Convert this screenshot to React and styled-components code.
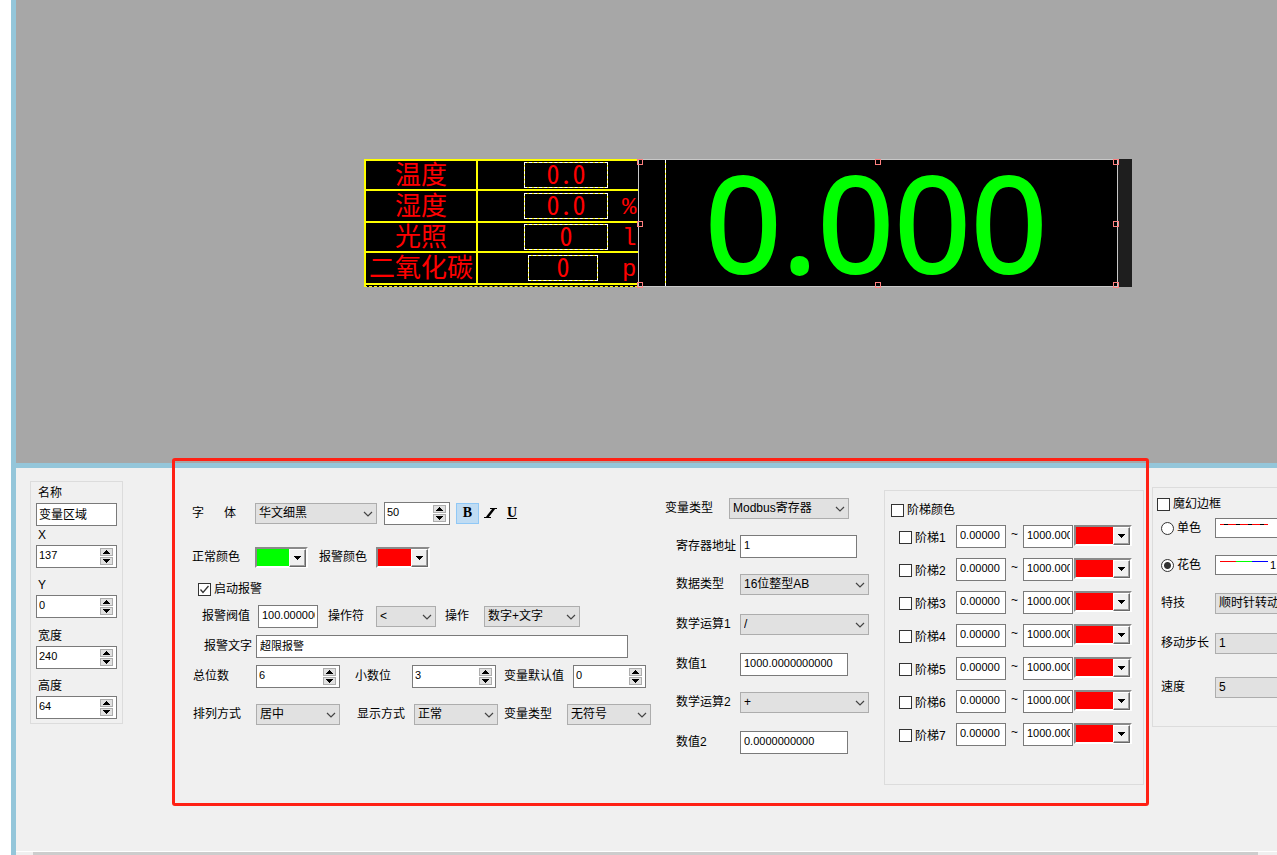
import React, { useId, useState } from "react";
import styled, { createGlobalStyle } from "styled-components";

const ledRows = [
  { name: "温度", value: "0.0", unit: "", boxLeft: 46, boxWidth: 84, height: 30 },
  { name: "湿度", value: "0.0", unit: "%RH", boxLeft: 46, boxWidth: 84, height: 32 },
  { name: "光照", value: "0", unit: "lx", boxLeft: 46, boxWidth: 84, height: 30 },
  { name: "二氧化碳", value: "0", unit: "ppm", boxLeft: 50, boxWidth: 70, height: 32 },
];

const handles = ["0 0", "0 50", "0 100", "50 0", "50 100", "100 0", "100 50", "100 100"];

const stages = [1, 2, 3, 4, 5, 6, 7];

const Spin = ({ id, width, value }) => {
  const [number, setNumber] = useState(value);
  return (
    <SpinBox $w={width}>
      <input id={id} value={number} onChange={(e) => setNumber(e.target.value)} />
      <div className="arrows">
        <button aria-label="增加" onClick={() => setNumber(Number(number) + 1)}>
          <svg width="7" height="4" viewBox="0 0 7 4">
            <path d="M3 0h1v1h1v1h1v1h1v1H0V3h1V2h1V1h1z" />
          </svg>
        </button>
        <button aria-label="减少" onClick={() => setNumber(Number(number) - 1)}>
          <svg width="7" height="4" viewBox="0 0 7 4">
            <path d="M0 0h7v1H6v1H5v1H4v1H3V3H2V2H1V1H0z" />
          </svg>
        </button>
      </div>
    </SpinBox>
  );
};

const Select = ({ id, width, value }) => (
  <SelectBox $w={width}>
    <select id={id} defaultValue={value}>
      <option>{value}</option>
    </select>
    <svg width="10" height="6" viewBox="0 0 10 6">
      <path d="M1 1l4 4 4-4" fill="none" stroke="#444" strokeWidth="1.2" />
    </svg>
  </SelectBox>
);

const Color = ({ id, width, color, label }) => (
  <ColorButton id={id} aria-label={label} $w={width} $color={color}>
    <span className="swatch" />
    <span className="drop">
      <svg width="7" height="4" viewBox="0 0 7 4">
        <path d="M0 0h7v1H6v1H5v1H4v1H3V3H2V2H1V1H0z" />
      </svg>
    </span>
  </ColorButton>
);

const Field = ({ label, labelWidth, left, type, width, value, color }) => {
  const id = useId();
  return (
    <>
      <Label htmlFor={id} $w={labelWidth} $left={left}>
        {label}
      </Label>
      {type === "spin" && <Spin id={id} width={width} value={value} />}
      {type === "select" && <Select id={id} width={width} value={value} />}
      {type === "text" && <TextInput id={id} $w={width} defaultValue={value} />}
      {type === "color" && <Color id={id} width={width} color={color} />}
    </>
  );
};

const App = () => {
  return (
    <Page>
      <GlobalStyle />
      <Canvas>
        <Screen>
          <LedTable>
            <tbody>
              {ledRows.map((row) => (
                <LedRow key={row.name} $h={row.height}>
                  <td className="name">{row.name}</td>
                  <td className="value">
                    <LedValue $left={row.boxLeft} $w={row.boxWidth}>
                      {row.value}
                    </LedValue>
                  </td>
                  <td className="unit">{row.unit}</td>
                </LedRow>
              ))}
            </tbody>
          </LedTable>
          <Variable>
            <span className="guide" />
            0.000
            {handles.map((place) => (
              <Handle key={place} $x={place.split(" ")[0]} $y={place.split(" ")[1]} />
            ))}
          </Variable>
        </Screen>
      </Canvas>

      <Panel>
        <Position>
          <div className="item">
            <label htmlFor="area-name">名称</label>
            <TextInput id="area-name" className="title" $w={81} defaultValue="变量区域" />
          </div>
          <div className="item">
            <label htmlFor="area-x">X</label>
            <Spin id="area-x" width={81} value="137" />
          </div>
          <div className="item">
            <label htmlFor="area-y">Y</label>
            <Spin id="area-y" width={81} value="0" />
          </div>
          <div className="item">
            <label htmlFor="area-w">宽度</label>
            <Spin id="area-w" width={81} value="240" />
          </div>
          <div className="item">
            <label htmlFor="area-h">高度</label>
            <Spin id="area-h" width={81} value="64" />
          </div>
        </Position>

        <Main>
          <Column $top={33} $w={473}>
            <Row>
              <Field label="字      体" labelWidth={63} type="select" width={122} value="华文细黑" />
              <FontSize>
                <Spin id="font-size" width={66} value="50" />
              </FontSize>
              <StyleButton $active aria-label="粗体">B</StyleButton>
              <StyleButton aria-label="斜体">
                <svg width="13" height="10" viewBox="0 0 13 10">
                  <path d="M6 .5h7M0 9.500h7" stroke="#000" />
                  <path d="M10 .5L3 9.500" stroke="#000" strokeWidth="2.4" />
                </svg>
              </StyleButton>
              <StyleButton aria-label="下划线"><u>U</u></StyleButton>
            </Row>
            <Row $gap={20}>
              <Field label="正常颜色" labelWidth={63} type="color" width={53} color="#00ff00" />
              <Field label="报警颜色" labelWidth={57} left={11} type="color" width={54} color="#ff0000" />
            </Row>
            <Row $gap={8} $indent={6}>
              <Check>
                <input type="checkbox" defaultChecked />
                启动报警
              </Check>
            </Row>
            <Row $gap={3} $indent={10}>
              <Field label="报警阀值" labelWidth={56} type="text" width={60} value="100.000000" />
              <Field label="操作符" labelWidth={48} left={10} type="select" width={60} value="<" />
              <Field label="操作" labelWidth={39} left={9} type="select" width={96} value="数字+文字" />
            </Row>
            <Row $gap={6} $indent={12}>
              <Field label="报警文字" labelWidth={52} type="text" width={372} value="超限报警" />
            </Row>
            <Row $gap={6} $indent={1}>
              <Field label="总位数" labelWidth={63} type="spin" width={84} value="6" />
              <Field label="小数位" labelWidth={57} left={15} type="spin" width={84} value="3" />
              <Field label="变量默认值" labelWidth={69} left={8} type="spin" width={73} value="0" />
            </Row>
            <Row $gap={14} $indent={1}>
              <Field label="排列方式" labelWidth={63} type="select" width={84} value="居中" />
              <Field label="显示方式" labelWidth={57} left={17} type="select" width={84} value="正常" />
              <Field label="变量类型" labelWidth={63} left={6} type="select" width={84} value="无符号" />
            </Row>
          </Column>

          <Column $top={28} $w={219}>
            <Row>
              <Field label="变量类型" labelWidth={64} type="select" width={120} value="Modbus寄存器" />
            </Row>
            <Row $gap={14} $indent={11}>
              <Field label="寄存器地址" labelWidth={64} type="text" width={117} value="1" />
            </Row>
            <Row $gap={14} $indent={11}>
              <Field label="数据类型" labelWidth={64} type="select" width={129} value="16位整型AB" />
            </Row>
            <Row $gap={16} $indent={11}>
              <Field label="数学运算1" labelWidth={64} type="select" width={129} value="/" />
            </Row>
            <Row $gap={16} $indent={11}>
              <Field label="数值1" labelWidth={64} type="text" width={108} value="1000.0000000000" />
            </Row>
            <Row $gap={14} $indent={11}>
              <Field label="数学运算2" labelWidth={64} type="select" width={129} value="+" />
            </Row>
            <Row $gap={16} $indent={11}>
              <Field label="数值2" labelWidth={64} type="text" width={108} value="0.0000000000" />
            </Row>
          </Column>

          <Stages>
            <Check>
              <input type="checkbox" />
              阶梯颜色
            </Check>
            {stages.map((n) => (
              <StageRow key={n}>
                <Check>
                  <input type="checkbox" />
                  阶梯{n}
                </Check>
                <TextInput aria-label={`阶梯${n} 下限`} $w={50} defaultValue="0.00000" />
                <span className="tilde">~</span>
                <TextInput aria-label={`阶梯${n} 上限`} $w={50} defaultValue="1000.00000" />
                <Color label={`阶梯${n} 颜色`} width={58} color="#ff0000" />
              </StageRow>
            ))}
          </Stages>
          <Highlight />
        </Main>

        <Magic>
          <Row>
            <Check>
              <input type="checkbox" />
              魔幻边框
            </Check>
          </Row>
          <Row $indent={4}>
            <Check $w={54}>
              <input type="radio" name="magic" />
              单色
            </Check>
            <LineSelect aria-label="单色线型" $line="repeating-linear-gradient(90deg, #f00 0 4px, #000 4px 8px, #f00 8px 12px)">
              <option aria-label="1" />
            </LineSelect>
          </Row>
          <Row $gap={13} $indent={4}>
            <Check $w={54}>
              <input type="radio" name="magic" defaultChecked />
              花色
            </Check>
            <LineSelect aria-label="花色线型" $line="linear-gradient(90deg, #f00 0 16px, #0f0 16px 32px, #00f 32px 48px)">
              <option>1</option>
            </LineSelect>
          </Row>
          <Row $gap={14} $indent={4}>
            <Field label="特技" labelWidth={54} type="select" width={120} value="顺时针转动" />
          </Row>
          <Row $gap={16} $indent={4}>
            <Field label="移动步长" labelWidth={54} type="select" width={120} value="1" />
          </Row>
          <Row $gap={20} $indent={4}>
            <Field label="速度" labelWidth={54} type="select" width={120} value="5" />
          </Row>
        </Magic>
      </Panel>
      <ScrollBar>
        <span />
      </ScrollBar>
    </Page>
  );
};

export default App;

const GlobalStyle = createGlobalStyle`
  * {
    box-sizing: border-box;
  }

  body {
    margin: 0;
    background: #fff;
  }

  body, input, select, button {
    font-family: "Liberation Sans", "Noto Sans CJK SC", sans-serif;
    font-size: 12px;
    color: #000;
  }

  input, select, button {
    margin: 0;
    padding: 0;
    border-radius: 0;
    outline: none;
  }
`;

const Page = styled.div`
  display: flex;
  flex-direction: column;
  min-height: 100vh;
  margin-left: 11px;
  border-left: 5px solid #94c6da;
  overflow: hidden;
`;

const Canvas = styled.div`
  flex: 1;
  padding: 159px 0 0 348px;
  background: #a7a7a7;
`;

const Screen = styled.div`
  display: flex;
  width: 768px;
  height: 128px;
  background: #1e1e1e;
`;

const LedTable = styled.table`
  position: relative;
  display: block;
  width: 274px;
  height: 128px;
  border-top: 2px solid #ff0;
  border-left: 2px solid #ff0;
  border-spacing: 0;
  background: #000;
  color: #f00;
  overflow: hidden;

  tbody {
    display: block;
  }

  &::after {
    content: "";
    position: absolute;
    inset: -2px 0 0 -2px;
    border: 1px dashed #fff;
    border-right: 0;
    border-bottom-color: #ff0;
  }
`;

const LedRow = styled.tr`
  display: flex;
  align-items: center;
  height: ${(p) => p.$h}px;
  border-bottom: 2px solid #ff0;
  font-size: 26px;
  line-height: 26px;

  td {
    padding: 0;
  }

  .name {
    display: flex;
    align-items: center;
    justify-content: center;
    align-self: stretch;
    flex: none;
    width: 112px;
    border-right: 2px solid #ff0;
    white-space: nowrap;
  }

  .value {
    width: 144px;
    flex: none;
  }

  .unit {
    padding-top: 3px;
    font-family: "Liberation Mono", monospace;
    font-size: 24px;
    line-height: 24px;
  }
`;

const LedValue = styled.div`
  width: ${(p) => p.$w}px;
  height: 26px;
  margin-left: ${(p) => p.$left}px;
  border: 1px dashed #fff;
  background: linear-gradient(#000, #000) padding-box, #ff0 border-box;
  font-family: "Noto Sans CJK SC", sans-serif;
  font-feature-settings: "hwid";
  line-height: 20px;
  text-align: center;
`;

const Variable = styled.div`
  position: relative;
  width: 480px;
  border: 1px solid #c8c8c8;
  background: #000;
  color: #0f0;
  font-family: "Noto Sans", sans-serif;
  font-size: 134px;
  line-height: 122px;
  -webkit-text-stroke: 2px #0f0;
  padding-left: 66px;

  .guide {
    position: absolute;
    top: 0;
    bottom: 0;
    left: 26px;
    border-left: 1px dashed #fff;
    background: #ff0;
    width: 1px;
  }
`;

const Handle = styled.span`
  position: absolute;
  left: calc(${(p) => p.$x}% - ${(p) => p.$x * 0.02 + 2}px);
  top: calc(${(p) => p.$y}% - ${(p) => p.$y * 0.03 + 1}px);
  width: 6px;
  height: 6px;
  border: 1px solid #ff8080;
`;

const Panel = styled.div`
  display: flex;
  align-items: flex-start;
  padding: 0 0 45px 14px;
  border-top: 5px solid #94c6da;
  background: #f0f0f0;

  > * {
    flex: none;
  }
`;

const Position = styled.div`
  display: grid;
  grid-template-rows: 42px 42px 50px 51px 50px;
  align-items: end;
  width: 93px;
  height: 243px;
  margin-top: 13px;
  padding: 2px 5px;
  border: 1px solid #dcdcdc;

  label {
    display: block;
    margin: 0 0 2px 2px;
    line-height: 16px;
  }
`;

const Main = styled.div`
  position: relative;
  display: flex;
  align-items: flex-start;
  height: 338px;
  margin-left: 49px;
  padding: 0 5px 0 20px;
`;

// red frame round the variable settings
const Highlight = styled.div`
  position: absolute;
  inset: -10px 0 0 0;
  border: 3px solid #ff2014;
  border-radius: 3px;
  pointer-events: none;
`;

const Column = styled.div`
  width: ${(p) => p.$w}px;
  padding-top: ${(p) => p.$top}px;
`;

const Row = styled.div`
  display: flex;
  align-items: center;
  height: 24px;
  margin-top: ${(p) => p.$gap || 0}px;
  padding-left: ${(p) => p.$indent || 0}px;
`;

const Label = styled.label`
  flex: none;
  width: ${(p) => p.$w}px;
  margin-left: ${(p) => p.$left || 0}px;
  line-height: 16px;
  white-space: pre;
`;

const TextInput = styled.input`
  display: block;
  flex: none;
  width: ${(p) => p.$w}px;
  height: 23px;
  padding: 0 2px 3px 3px;
  border: 1px solid #7a7a7a;
  background: #fff;
  font-size: 11px;

  &.title {
    padding-left: 2px;
    font-size: 12px;
  }
`;

const SpinBox = styled.div`
  display: flex;
  align-items: center;
  flex: none;
  width: ${(p) => p.$w}px;
  height: 23px;
  padding-right: 3px;
  border: 1px solid #7a7a7a;
  background: #fff;

  input {
    flex: 1;
    min-width: 0;
    height: 21px;
    padding: 0 0 3px 2px;
    border: 0;
    background: none;
    font-size: 11px;
  }

  .arrows {
    display: flex;
    flex-direction: column;
    gap: 1px;
  }

  button {
    display: flex;
    align-items: center;
    justify-content: center;
    width: 13px;
    height: 8px;
    border: 1px solid #adadad;
    background: #e1e1e1;
  }

  svg {
    flex: none;
  }
`;

const FontSize = styled.div`
  margin: 0 6px 0 7px;
`;

const SelectBox = styled.div`
  position: relative;
  flex: none;
  width: ${(p) => p.$w}px;
  height: 21px;

  select {
    display: block;
    width: 100%;
    height: 100%;
    padding-left: 3px;
    border: 1px solid #adadad;
    background: #e1e1e1;
    appearance: none;
  }

  svg {
    position: absolute;
    top: 8px;
    right: 4px;
    pointer-events: none;
  }
`;

const LineSelect = styled.select`
  flex: none;
  width: 120px;
  height: 20px;
  padding-left: 54px;
  border: 1px solid #7a7a7a;
  background: ${(p) => p.$line} 4px 5px / 48px 1px no-repeat #fff;
  font-size: 11px;
  appearance: none;
`;

const ColorButton = styled.button`
  display: flex;
  flex: none;
  width: ${(p) => p.$w}px;
  height: 21px;
  border: 2px solid;
  border-color: #8a8a8a #fff #fff #8a8a8a;
  background: #f0f0f0;

  .swatch {
    flex: 1;
    height: 17px;
    background: ${(p) => p.$color};
  }

  .drop {
    display: flex;
    align-items: center;
    justify-content: center;
    width: 17px;
    height: 18px;
    border: 1px solid;
    border-color: #fff #696969 #696969 #fff;
    box-shadow: inset -1px -1px #a0a0a0;
  }
`;

const StyleButton = styled.button`
  display: flex;
  align-items: center;
  justify-content: center;
  width: ${(p) => (p.$active ? 23 : 22)}px;
  height: 21px;
  border: 1px solid ${(p) => (p.$active ? "#90c8f6" : "transparent")};
  background: ${(p) => (p.$active ? "#c0dcf3" : "transparent")};
  font-family: "Liberation Serif", serif;
  font-size: 14px;
  font-weight: 700;
`;

const Check = styled.label`
  display: flex;
  align-items: center;
  flex: none;
  gap: 3px;
  width: ${(p) => (p.$w ? `${p.$w}px` : "auto")};
  line-height: 16px;
  white-space: nowrap;

  input {
    flex: none;
    width: 13px;
    height: 13px;
    border: 1px solid #333;
    background: #fff;
    appearance: none;
  }

  input[type="checkbox"]:checked {
    background: url("data:image/svg+xml,%3Csvg xmlns='http://www.w3.org/2000/svg' viewBox='0 0 11 11'%3E%3Cpath d='M1.5 5.5l2.5 3 5.500-6.500' fill='none' stroke='%23333' stroke-width='1.3'/%3E%3C/svg%3E") #fff;
  }

  input[type="radio"] {
    border-radius: 50%;
  }

  input[type="radio"]:checked {
    background: radial-gradient(circle, #333 0 3px, #fff 4px);
  }
`;

const Stages = styled.div`
  width: 260px;
  height: 295px;
  margin-top: 22px;
  padding: 11px 6px 0;
  border: 1px solid #dcdcdc;
`;

const StageRow = styled.div`
  display: flex;
  height: 23px;
  margin: 7px 0 10px 8px;

  & + & {
    margin-top: 0;
  }

  ${Check} {
    width: 57px;
    padding-top: 2px;
  }

  .tilde {
    width: 17px;
    line-height: 18px;
    text-align: center;
  }

  ${ColorButton} {
    margin-left: 1px;
  }
`;

const Magic = styled.div`
  width: 240px;
  height: 240px;
  margin: 19px 0 0 3px;
  padding: 4px;
  border: 1px solid #dcdcdc;
`;

const ScrollBar = styled.div`
  height: 4px;
  padding: 0 19px 0 17px;
  border-top: 1px solid #fff;
  background: #f0f0f0;

  span {
    display: block;
    height: 3px;
    background: #cdcdcd;
  }
`;
